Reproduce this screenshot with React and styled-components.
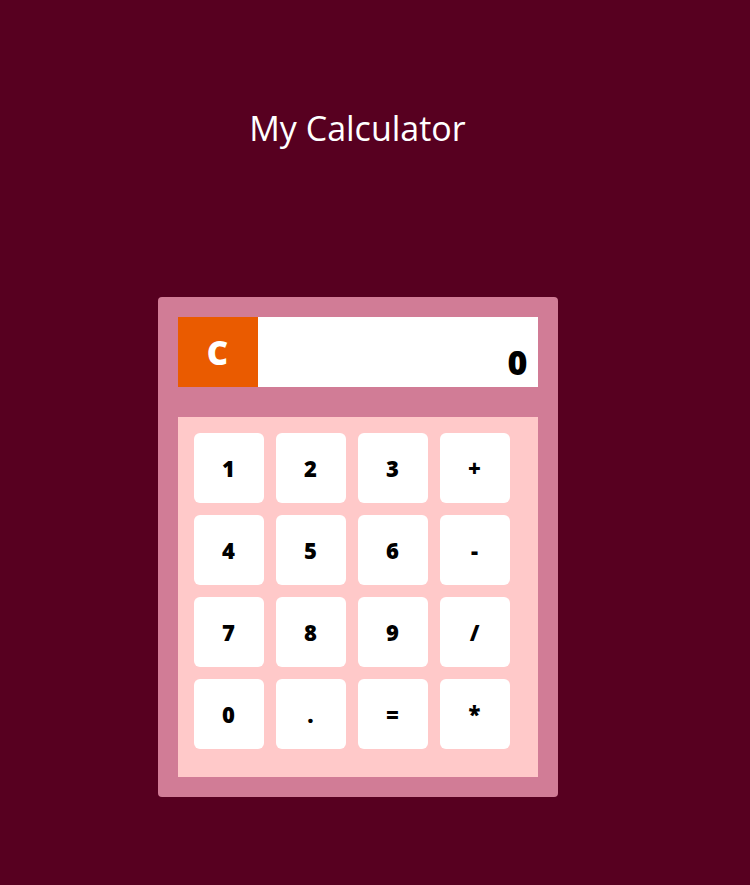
import React, { useState } from 'react';
import styled, { createGlobalStyle } from 'styled-components';

const GlobalStyle = createGlobalStyle`
  html, body {
    margin: 0;
    padding: 0;
    background: #570020;
    font-family: "Open Sans", "Noto Sans", sans-serif;
  }
`;

const KEYS = ['1', '2', '3', '+', '4', '5', '6', '-', '7', '8', '9', '/', '0', '.', '=', '*'];

export default function App() {
  const [value, setValue] = useState('0');

  const press = (k) => {
    if (k === '=') {
      try {
        // eslint-disable-next-line no-new-func
        setValue(String(Function('return (' + value + ')')()));
      } catch (e) {
        setValue('0');
      }
      return;
    }
    setValue(value === '0' && k !== '.' ? k : value + k);
  };

  return (
    <Page>
      <GlobalStyle />
      <Title>My Calculator</Title>
      <Calculator>
        <Top>
          <ClearButton onClick={() => setValue('0')}>C</ClearButton>
          <Display>{value}</Display>
        </Top>
        <Keypad>
          {KEYS.map((k) => (
            <Key key={k} onClick={() => press(k)}>{k}</Key>
          ))}
        </Keypad>
      </Calculator>
    </Page>
  );
}

const Page = styled.div`
  width: 715px;
  min-height: 885px;
  display: flex;
  flex-direction: column;
  align-items: center;
`;

const Title = styled.h1`
  margin: 104px 0 0;
  font-size: 34px;
  font-weight: 400;
  color: #ffffff;
  line-height: 48px;
`;

const Calculator = styled.div`
  margin-top: 145px;
  width: 360px;
  padding: 20px;
  background: #d17c96;
  border-radius: 4px;
  display: flex;
  flex-direction: column;
  gap: 30px;
`;

const Top = styled.div`
  display: flex;
  height: 70px;
`;

const ClearButton = styled.button`
  width: 80px;
  border: 0;
  background: #ea5b00;
  color: #ffffff;
  font-family: inherit;
  font-size: 33px;
  font-weight: 800;
  cursor: pointer;
`;

const Display = styled.div`
  flex: 1;
  background: #ffffff;
  color: #000000;
  font-size: 34px;
  font-weight: 800;
  text-align: right;
  display: flex;
  align-items: flex-end;
  justify-content: flex-end;
  padding: 0 10px 2px;
`;

const Keypad = styled.div`
  height: 360px;
  box-sizing: border-box;
  padding: 16px;
  background: #ffc9c9;
  display: grid;
  grid-template-columns: repeat(4, 70px);
  grid-auto-rows: 70px;
  gap: 12px;
  align-content: start;
`;

const Key = styled.button`
  border: 0;
  border-radius: 6px;
  background: #ffffff;
  color: #000000;
  font-family: inherit;
  font-size: 22px;
  font-weight: 800;
  cursor: pointer;
`;
